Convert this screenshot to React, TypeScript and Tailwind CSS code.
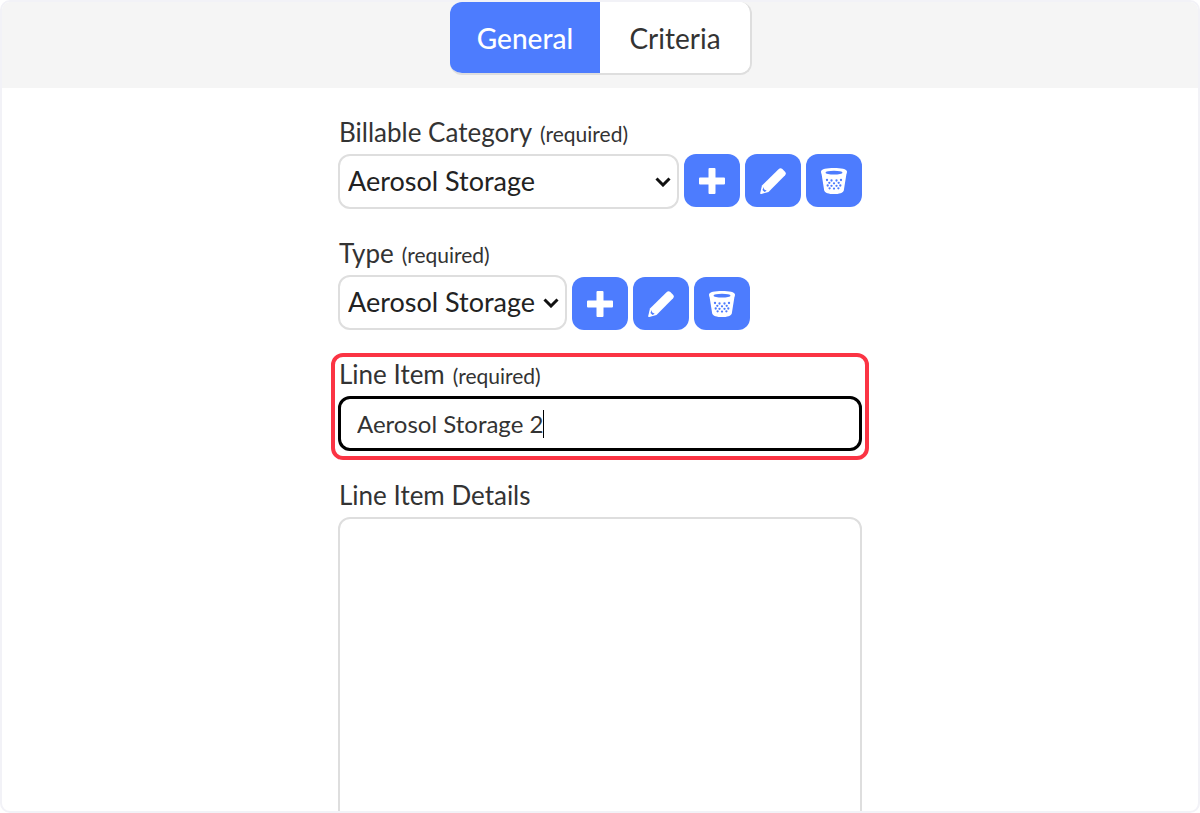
import { useState, type ReactNode } from "react";

function PlusIcon() {
  return (
    <svg viewBox="0 0 26 26" className="size-[26px]" fill="currentColor" aria-hidden="true">
      <path d="M10.500 0h5q1 0 1 1v8.500H25q1 0 1 1v5q0 1-1 1h-8.500V25q0 1-1 1h-5q-1 0-1-1v-8.500H1q-1 0-1-1v-5q0-1 1-1h8.500V1q0-1 1-1z" />
    </svg>
  );
}

function PencilIcon() {
  return (
    <svg viewBox="0 0 26 26" className="size-[26px]" aria-hidden="true">
      <path
        fill="currentColor"
        d="M2 17.500 18.800.9q1.800-1.500 3.600.2l2.600 2.600q1.700 1.800.1 3.600L8.500 24 1.300 26Q0 26.200.2 25z"
      />
      <path fill="#4d7cfe" d="M3.600 19l.4 2.300 2.700 1.500-2.200 1.200-2-2z" />
    </svg>
  );
}

const TRASH_HOLES = [
  [6, 12],
  [10.500, 12.500],
  [15.500, 12.500],
  [20, 12],
  [8.300, 14.800],
  [13, 15.300],
  [17.700, 14.800],
  [10.500, 17.800],
  [15.500, 17.800],
  [6.700, 17.500],
  [19.300, 17.500],
  [8.600, 20.300],
  [13, 20.600],
  [17.400, 20.300],
];

function TrashIcon() {
  return (
    <svg viewBox="0 0 26 26" className="size-[26px]" aria-hidden="true">
      <path
        fill="currentColor"
        d="M0 3.500C0 1 6 0 13 0s13 1 13 3.500c0 1-.2 1.900-.6 2.700l-2.600 16.200C22.300 24.800 18 26 13 26s-9.300-1.200-9.800-3.600L.6 6.200C.2 5.400 0 4.500 0 3.500z"
      />
      <ellipse cx="13" cy="4.700" rx="8.500" ry="1.900" fill="#4d7cfe" />
      <g fill="#4d7cfe">
        {TRASH_HOLES.map(([cx, cy]) => (
          <circle key={`${cx}-${cy}`} cx={cx} cy={cy} r="1.150" />
        ))}
      </g>
    </svg>
  );
}

function IconButton({ label, children }: { label: string; children: ReactNode }) {
  return (
    <button
      type="button"
      aria-label={label}
      className="flex h-[53px] w-14 shrink-0 items-center justify-center rounded-xl bg-[#4d7cfe] text-white"
    >
      {children}
    </button>
  );
}

function ItemActions({ name }: { name: string }) {
  return (
    <>
      <IconButton label={`Add ${name}`}>
        <PlusIcon />
      </IconButton>
      <IconButton label={`Edit ${name}`}>
        <PencilIcon />
      </IconButton>
      <IconButton label={`Delete ${name}`}>
        <TrashIcon />
      </IconButton>
    </>
  );
}

function FieldLabel({ htmlFor, required, children }: { htmlFor: string; required?: boolean; children: ReactNode }) {
  return (
    <label htmlFor={htmlFor} className="mb-1 block pl-px text-[26px] leading-9">
      {children}
      {required && <span className="ml-2 text-[21px] leading-none">(required)</span>}
    </label>
  );
}

function Select({ id, options }: { id: string; options: string[] }) {
  return (
    <div className="relative w-full">
      <select
        id={id}
        className="h-[55px] w-full appearance-none rounded-xl border-2 border-[#dedede] bg-white pl-2 text-[27px] text-[#222]"
      >
        {options.map((option) => (
          <option key={option}>{option}</option>
        ))}
      </select>
      <svg
        viewBox="0 0 16 10"
        className="pointer-events-none absolute top-[23px] right-2 h-[10px] w-4"
        fill="none"
        stroke="#111"
        strokeWidth="3"
        aria-hidden="true"
      >
        <path d="M1.500 1.500 8 8l6.500-6.500" />
      </svg>
    </div>
  );
}

export default function App() {
  const [tab, setTab] = useState("General");
  const [lineItem, setLineItem] = useState("Aerosol Storage 2");

  return (
    <div className="h-screen overflow-hidden rounded-[10px] border-2 border-[#f2f2f7] bg-white font-['Lato',sans-serif] text-[#333]">
      <header className="flex h-[86px] items-start justify-center bg-[#f5f5f5] pl-0.5">
        <div className="flex overflow-hidden rounded-xl border-r-2 border-b-2 border-[#dedede] bg-white">
          {["General", "Criteria"].map((name) => (
            <button
              key={name}
              type="button"
              onClick={() => setTab(name)}
              className={`h-[71px] w-[150px] text-[28px] ${
                tab === name ? "bg-[#4d7cfe] font-medium text-white" : "bg-white"
              }`}
            >
              {name}
            </button>
          ))}
        </div>
      </header>

      <form className="mx-auto flex max-w-[524px] flex-col gap-[26px] pt-[26px]">
        <div>
          <FieldLabel htmlFor="category" required>
            Billable Category
          </FieldLabel>
          <div className="flex items-start gap-[5px]">
            <Select id="category" options={["Aerosol Storage"]} />
            <ItemActions name="category" />
          </div>
        </div>

        <div>
          <FieldLabel htmlFor="type" required>
            Type
          </FieldLabel>
          <div className="flex items-end gap-[5px]">
            <div className="w-[229px]">
              <Select id="type" options={["Aerosol Storage"]} />
            </div>
            <ItemActions name="type" />
          </div>
        </div>

        <div className="relative">
          <FieldLabel htmlFor="line-item" required>
            Line Item
          </FieldLabel>
          <input
            id="line-item"
            type="text"
            value={lineItem}
            onChange={(e) => setLineItem(e.target.value)}
            className="block h-[55px] w-full rounded-xl border-3 border-black bg-white px-4 text-2xl outline-none"
          />
          <span className="pointer-events-none absolute top-[54px] left-[205px] h-7 w-px bg-black" />
          <div className="pointer-events-none absolute -inset-x-[7px] -top-[3px] -bottom-[9px] rounded-xl border-4 border-[#fb3444]" />
        </div>

        <div>
          <FieldLabel htmlFor="details">Line Item Details</FieldLabel>
          <textarea
            id="details"
            rows={12}
            className="block w-full resize-none rounded-xl border-2 border-[#dedede] bg-white px-4 py-3 text-2xl"
          />
        </div>
      </form>
    </div>
  );
}
